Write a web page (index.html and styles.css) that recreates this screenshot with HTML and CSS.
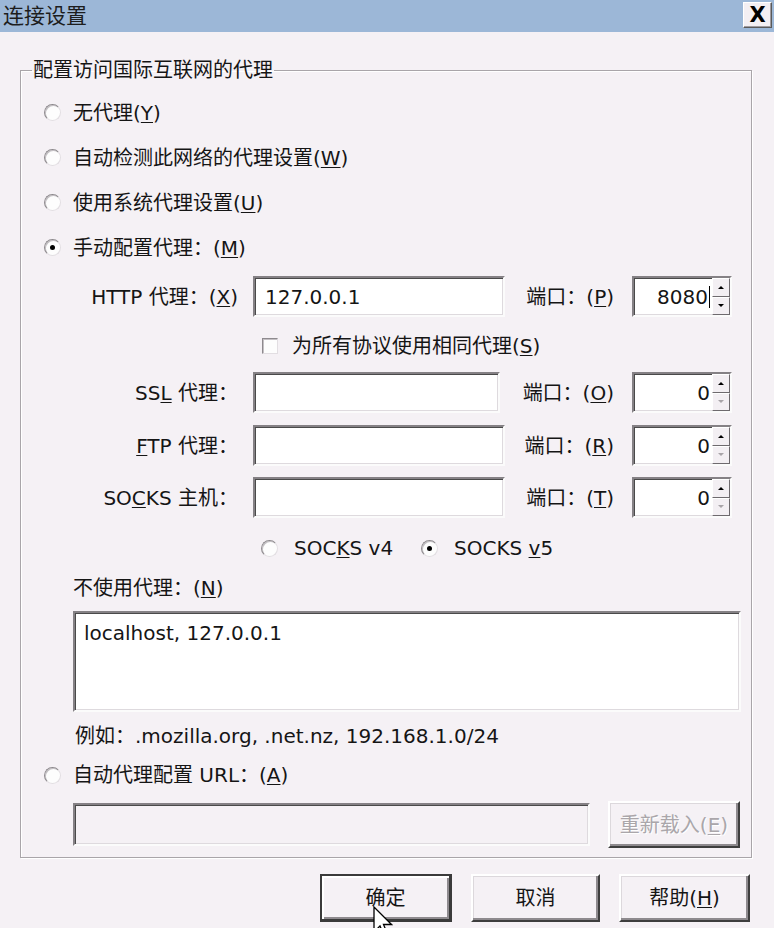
FILE: index.html
```html
<!DOCTYPE html>
<html lang="zh-CN">
<head>
    <meta charset="UTF-8">
    <title>连接设置</title>
    <link rel="stylesheet" href="styles.css">
</head>
<body>
    <div class="titlebar">
        <span class="title">连接设置</span>
        <span class="close">X</span>
    </div>

    <fieldset class="group">
        <legend>配置访问国际互联网的代理</legend>

        <div class="opt first"><span class="radio"></span><span>无代理(<u>Y</u>)</span></div>
        <div class="opt"><span class="radio"></span><span>自动检测此网络的代理设置(<u>W</u>)</span></div>
        <div class="opt"><span class="radio"></span><span>使用系统代理设置(<u>U</u>)</span></div>
        <div class="opt"><span class="radio on"></span><span>手动配置代理：(<u>M</u>)</span></div>

        <div class="proxy-row http">
            <span class="plabel">HTTP 代理：(<u>X</u>)</span>
            <div class="field sunken">127.0.0.1</div>
            <span class="port-label">端口：(<u>P</u>)</span>
            <div class="spin sunken">
                <span class="spin-value">8080<i class="caret"></i></span>
                <span class="spin-btns"><b class="up"></b><b class="down"></b></span>
            </div>
        </div>

        <div class="check-row"><span class="checkbox"></span><span>为所有协议使用相同代理(<u>S</u>)</span></div>

        <div class="proxy-row ssl">
            <span class="plabel">SS<u>L</u> 代理：</span>
            <div class="field sunken"></div>
            <span class="port-label">端口：(<u>O</u>)</span>
            <div class="spin sunken">
                <span class="spin-value">0</span>
                <span class="spin-btns"><b class="up"></b><b class="down off"></b></span>
            </div>
        </div>

        <div class="proxy-row ftp">
            <span class="plabel"><u>F</u>TP 代理：</span>
            <div class="field sunken"></div>
            <span class="port-label">端口：(<u>R</u>)</span>
            <div class="spin sunken">
                <span class="spin-value">0</span>
                <span class="spin-btns"><b class="up"></b><b class="down off"></b></span>
            </div>
        </div>

        <div class="proxy-row socks">
            <span class="plabel">SO<u>C</u>KS 主机：</span>
            <div class="field sunken"></div>
            <span class="port-label">端口：(<u>T</u>)</span>
            <div class="spin sunken">
                <span class="spin-value">0</span>
                <span class="spin-btns"><b class="up"></b><b class="down off"></b></span>
            </div>
        </div>

        <div class="socks-ver">
            <span class="ver"><span class="radio"></span><span>SOC<u>K</u>S v4</span></span>
            <span class="ver"><span class="radio on"></span><span>SOCKS <u>v</u>5</span></span>
        </div>

        <div class="indent noproxy-label">不使用代理：(<u>N</u>)</div>
        <div class="indent field sunken multi">localhost, 127.0.0.1</div>
        <div class="indent example">例如：.mozilla.org, .net.nz, 192.168.1.0/24</div>

        <div class="opt auto"><span class="radio"></span><span>自动代理配置 URL：(<u>A</u>)</span></div>

        <div class="indent url-row">
            <div class="field sunken disabled"></div>
            <span class="btn reload"><span>重新载入(<u>E</u>)</span></span>
        </div>
    </fieldset>

    <div class="buttons">
        <span class="btn default">确定</span>
        <span class="btn cancel">取消</span>
        <span class="btn help"><span>帮助(<u>H</u>)</span></span>
    </div>

    <svg class="pointer" width="20" height="32" viewBox="0 0 20 32">
        <path d="M1 1 L1 26 L7 20 L11.5 30.5 L15 29 L10.5 18.5 L18.5 18.5 Z" fill="#fff" stroke="#000" stroke-width="1.3"/>
    </svg>
</body>
</html>
```

FILE: styles.css
```css
body {
    margin: 0;
    width: 774px;
    height: 928px;
    overflow: hidden;
    position: relative;
    background-color: #f5f1f5;
    font-family: "DejaVu Sans", "Noto Sans CJK SC", sans-serif;
    font-size: 20px;
    line-height: 24px;
    color: #151515;
}

u {
    text-decoration: underline;
    text-underline-offset: 2px;
    text-decoration-thickness: 1px;
}

/* barra de titulo */
.titlebar {
    height: 32px;
    background-color: #9cb7d7;
    display: flex;
    justify-content: space-between;
}

.title {
    padding-left: 3px;
    font-size: 21px;
    line-height: 32px;
    color: #1d1d1d;
}

.close {
    width: 27px;
    height: 24px;
    margin: 2px 2px 0 0;
    background-color: #f3eff3;
    border: 1px solid;
    border-color: #ffffff #5a5a5a #5a5a5a #ffffff;
    box-shadow: inset -1px -1px 0 #a09ca0;
    display: flex;
    justify-content: center;
    align-items: center;
    font-weight: bold;
    font-size: 21px;
    color: #000;
}

/* grupo principal */
.group {
    margin: 26px 22px 0 20px;
    padding: 0 10px 9px 23px;
    border: 1px solid #a9a5a9;
    box-shadow: inset 1px 1px 0 #ffffff, 1px 1px 0 #ffffff;
    min-inline-size: 0;
}

.group legend {
    margin-left: -12px;
    padding: 0 1px;
    line-height: 24px;
}

.opt {
    height: 45px;
    display: flex;
    align-items: center;
}

.opt.first {
    margin-top: 8px;
}

.radio {
    width: 15px;
    height: 15px;
    flex: none;
    margin-right: 12px;
    border-radius: 50%;
    background-color: #fdfdfd;
    border: 1px solid;
    border-color: #8e8a8e #e2dee2 #e2dee2 #8e8a8e;
    box-shadow: inset 1px 1px 0 #c4c0c4;
    display: flex;
    justify-content: center;
    align-items: center;
}

.radio.on::after {
    content: "";
    width: 5px;
    height: 5px;
    border-radius: 50%;
    background-color: #000;
}

/* campos com borda afundada */
.sunken {
    box-sizing: border-box;
    background-color: #ffffff;
    border: 2px solid;
    border-color: #858185 #fbfbfb #fbfbfb #858185;
    box-shadow: inset 1px 1px 0 #4a4a4a, inset -1px -1px 0 #dedade;
}

.proxy-row {
    height: 41px;
    display: flex;
    align-items: center;
    white-space: nowrap;
}

.proxy-row.http {
    margin-top: 6px;
}

.proxy-row.ftp {
    margin-top: 12px;
}

.proxy-row.socks {
    margin-top: 11px;
}

.plabel {
    width: 194px;
    text-align: right;
}

.field {
    height: 41px;
    padding: 0 10px;
    display: flex;
    align-items: center;
}

.proxy-row .field {
    width: 252px;
    margin-left: 15px;
}

.proxy-row.ssl .field {
    width: 247px;
}

.port-label {
    width: 109px;
    text-align: right;
}

.proxy-row.ssl .port-label {
    width: 114px;
}

.spin {
    width: 100px;
    height: 41px;
    margin-left: 18px;
    display: flex;
}

.spin-value {
    flex: 1;
    display: flex;
    justify-content: flex-end;
    align-items: center;
    padding-right: 2px;
}

.caret {
    width: 1px;
    height: 22px;
    margin-left: 1px;
    background-color: #000;
}

.spin-btns {
    width: 18px;
    display: flex;
    flex-direction: column;
}

.spin-btns b {
    flex: 1;
    box-sizing: border-box;
    background-color: #f3eff3;
    border: 1px solid;
    border-color: #ffffff #6e6a6e #6e6a6e #ffffff;
    display: flex;
    justify-content: center;
    align-items: center;
}

.spin-btns b::after {
    content: "";
    border-left: 3px solid transparent;
    border-right: 3px solid transparent;
}

.spin-btns .up::after {
    border-bottom: 3px solid #000;
}

.spin-btns .down::after {
    border-top: 3px solid #000;
}

.spin-btns .down.off::after {
    border-top-color: #a8a4a8;
}

.check-row {
    height: 52px;
    padding: 3px 0 0 218px;
    display: flex;
    align-items: center;
}

.checkbox {
    width: 14px;
    height: 14px;
    margin-right: 14px;
    background-color: #fdfdfd;
    border: 1px solid;
    border-color: #8e8a8e #e2dee2 #e2dee2 #8e8a8e;
    box-shadow: inset 1px 1px 0 #c4c0c4;
}

.socks-ver {
    height: 46px;
    margin-top: 7px;
    padding-left: 217px;
    display: flex;
    align-items: center;
}

.ver {
    width: 160px;
    display: flex;
    align-items: center;
    white-space: pre;
}

.ver .radio {
    margin-right: 16px;
}

.indent {
    margin-left: 29px;
}

.noproxy-label {
    margin-top: 5px;
}

.field.multi {
    height: 101px;
    margin-top: 11px;
    padding: 8px 9px;
    align-items: flex-start;
}

.example {
    margin-top: 12px;
    padding-left: 2px;
}

.opt.auto {
    height: 24px;
    margin-top: 15px;
}

.url-row {
    margin-top: 14px;
    display: flex;
    align-items: center;
    gap: 18px;
}

.url-row .field {
    width: 517px;
    height: 43px;
}

.field.disabled {
    background-color: #f5f1f5;
}

/* botoes */
.btn {
    box-sizing: border-box;
    height: 48px;
    display: flex;
    justify-content: center;
    align-items: center;
    background-color: #f5f1f5;
    border: 2px solid;
    border-color: #ffffff #3e3e3e #3e3e3e #ffffff;
    box-shadow: inset -2px -2px 0 #8e8a8e, inset 1px 1px 0 #dcd8dc;
}

.btn.reload {
    width: 132px;
    height: 47px;
    color: #aaa6aa;
    text-shadow: 1px 1px 0 #ffffff;
}

.buttons {
    margin-top: 16px;
    padding-right: 24px;
    display: flex;
    justify-content: flex-end;
    gap: 19px;
}

.btn.default {
    width: 132px;
    border-color: #3a3a3a;
    border-width: 2px 3px 3px 2px;
    box-shadow: inset 2px 2px 0 #ffffff, inset -2px -2px 0 #8e8a8e;
}

.btn.cancel {
    width: 129px;
}

.btn.help {
    width: 131px;
}

.pointer {
    position: absolute;
    left: 373px;
    top: 906px;
}
```
